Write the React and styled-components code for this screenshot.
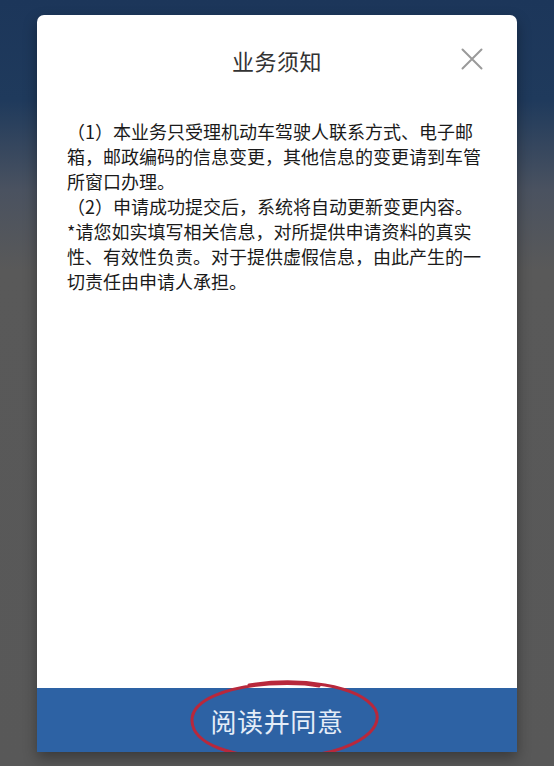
import React from "react";
import styled, { createGlobalStyle } from "styled-components";

const Global = createGlobalStyle`
  html, body {
    margin: 0;
    padding: 0;
  }
  body {
    width: 554px;
    height: 766px;
    overflow: hidden;
    font-family: "Noto Sans CJK SC", "Noto Sans", sans-serif;
    background: linear-gradient(
      180deg,
      #1c365a 0px,
      #1f3a5c 100px,
      #4a5260 190px,
      #595959 270px,
      #585858 766px
    );
    text-spacing-trim: space-all;
  }
`;

const Page = styled.div`
  display: flex;
  justify-content: center;
  padding-top: 15px;
`;

const Modal = styled.div`
  width: 480px;
  height: 737px;
  background: #ffffff;
  border-radius: 7px 7px 0 0;
  display: flex;
  flex-direction: column;
  overflow: hidden;
  box-shadow: 0 6px 14px rgba(0, 0, 0, 0.35);
`;

const Header = styled.div`
  display: grid;
  grid-template-columns: 1fr auto 1fr;
  align-items: center;
  padding-top: 30px;
  height: 30px;
`;

const Title = styled.div`
  grid-column: 2;
  font-size: 22px;
  line-height: 30px;
  color: #333333;
  letter-spacing: 0.5px;
`;

const Close = styled.button`
  grid-column: 3;
  justify-self: end;
  margin-right: 33px;
  margin-top: -2px;
  width: 24px;
  height: 24px;
  padding: 0;
  border: none;
  background: none;
  display: flex;
  align-items: center;
  justify-content: center;
`;

const Body = styled.div`
  flex: 1;
  padding: 44px 30px 0 30px;
  font-size: 18px;
  line-height: 25px;
  color: #1a1a1a;
`;

const Para = styled.p`
  margin: 0;
`;

const Footer = styled.div`
  position: relative;
  height: 64px;
  background: #2d62a4;
  display: flex;
  align-items: center;
  justify-content: center;
`;

const AgreeText = styled.span`
  font-size: 26px;
  line-height: 30px;
  color: #e4edf8;
  letter-spacing: 0.6px;
  margin-top: 2px;
`;

const Mark = styled.svg`
  position: absolute;
  left: 152px;
  top: -9px;
  width: 194px;
  height: 82px;
  pointer-events: none;
  overflow: visible;
`;

export default function App() {
  return (
    <>
      <Global />
      <Page>
        <Modal>
          <Header>
            <Title>业务须知</Title>
            <Close aria-label="关闭">
              <svg width="22" height="22" viewBox="0 0 22 22">
                <path
                  d="M1.5 1.5 L20.5 20.5 M20.5 1.5 L1.5 20.5"
                  stroke="#9a9a9a"
                  strokeWidth="2"
                  fill="none"
                  strokeLinecap="round"
                />
              </svg>
            </Close>
          </Header>
          <Body>
            <Para>
              （1）本业务只受理机动车驾驶人联系方式、电子邮箱，邮政编码的信息变更，其他信息的变更请到车管所窗口办理。
            </Para>
            <Para>（2）申请成功提交后，系统将自动更新变更内容。</Para>
            <Para>
              *请您如实填写相关信息，对所提供申请资料的真实性、有效性负责。对于提供虚假信息，由此产生的一切责任由申请人承担。
            </Para>
          </Body>
          <Footer>
            <AgreeText>阅读并同意</AgreeText>
            <Mark viewBox="0 0 194 82">
              <path
                d="M60 6 C 110 -2, 170 6, 186 30 C 198 52, 160 76, 100 78 C 40 80, 4 64, 3 42 C 2 20, 40 8, 80 5 C 100 4, 120 5, 130 7"
                stroke="#b8283c"
                strokeWidth="3"
                fill="none"
                strokeLinecap="round"
              />
            </Mark>
          </Footer>
        </Modal>
      </Page>
    </>
  );
}
